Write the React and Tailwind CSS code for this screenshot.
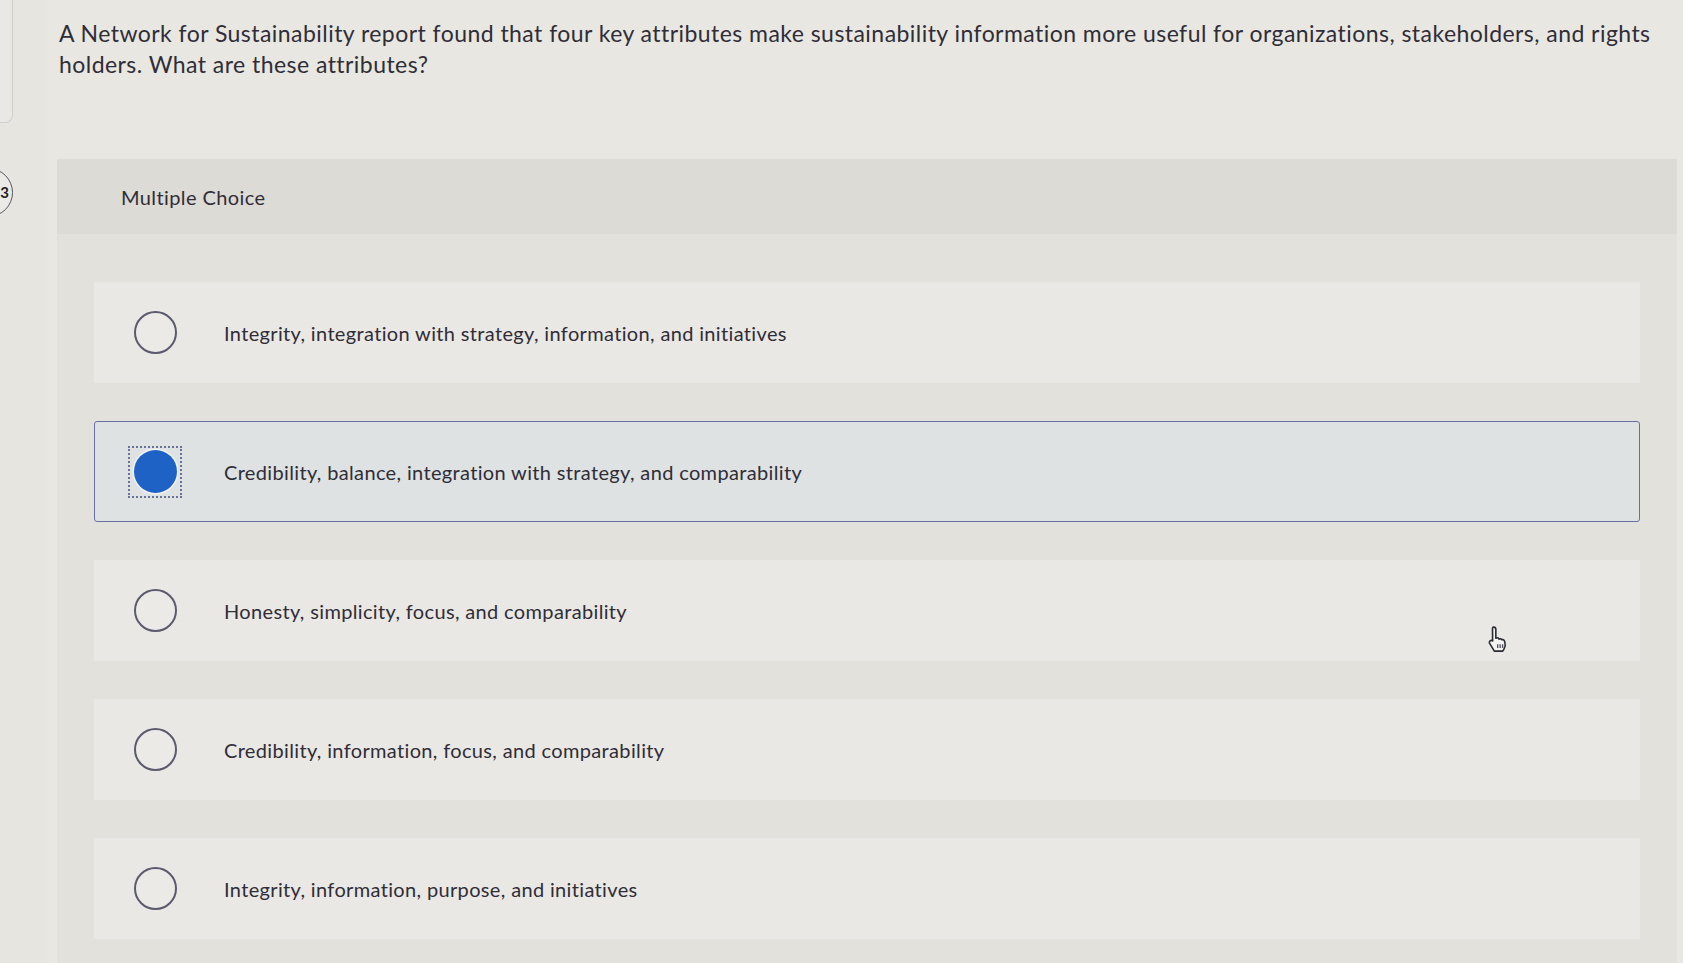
import React from "react";

const options = [
  "Integrity, integration with strategy, information, and initiatives",
  "Credibility, balance, integration with strategy, and comparability",
  "Honesty, simplicity, focus, and comparability",
  "Credibility, information, focus, and comparability",
  "Integrity, information, purpose, and initiatives",
];

function Radio({ selected }) {
  if (selected) {
    return (
      <div className="w-[54px] h-[52px] -ml-[6px] -mr-[5px] border-[2px] border-dotted border-[#6a6f9c] flex items-center justify-center shrink-0">
        <div className="w-[43px] h-[43px] rounded-full bg-[#1f62c6] ring-[1.5px] ring-[#f1f2f2]" />
      </div>
    );
  }
  return (
    <div className="w-[43px] h-[43px] rounded-full border-[2px] border-[#5b5a6e] bg-[#ebeae6] shrink-0" />
  );
}

function Cursor() {
  return (
    <svg width="30" height="32" viewBox="0 0 24 26" className="absolute left-[1486px] top-[624px]">
      <path
        d="M6 2.5c1 0 1.8.8 1.8 1.8v7.2l.6-.2c.9-.3 1.8.2 2.1 1 .7-.4 1.7-.2 2.2.5.8-.3 1.8.1 2.1 1l.4 1.3c.5 1.8.2 3.7-.8 5.3l-1 1.6H6.6L2.9 16c-.6-.8-.4-1.9.4-2.4.6-.4 1.4-.3 1.9.2l-.1-9.5C5.1 3.3 5.2 2.5 6 2.5z"
        fill="#f4f4f2"
        stroke="#2a2a33"
        strokeWidth="1.3"
        strokeLinejoin="round"
      />
      <path d="M9.3 16.5v3M11.3 16.5v3M13.3 16.5v3" stroke="#55555f" strokeWidth="1.1" />
    </svg>
  );
}

export default function App() {
  return (
    <div
      className="relative w-full h-[963px] overflow-hidden bg-[#e8e7e2] flex text-[#302d37]"
      style={{ fontFamily: "Lato, 'Open Sans', sans-serif" }}
    >
      {/* left edge strip */}
      <div className="w-[47px] shrink-0 flex flex-col overflow-hidden bg-[#e6e5e0]">
        <div className="w-[13px] h-[123px] border-r-[1.5px] border-b-[1.5px] border-[#cfcec9] rounded-br-[8px] bg-[#e9e8e4]" />
        <div className="mt-[45px] -ml-[36px] w-[49px] h-[49px] rounded-full border-[1.5px] border-[#55545c] bg-[#ebeae6] flex items-center justify-end pr-[3px] text-[15px] font-bold text-[#222]">
          3
        </div>
      </div>

      {/* main column */}
      <div className="flex-1 flex flex-col pl-[10px] pr-[6px]">
        <p className="pt-[18px] pl-[2px] pr-[20px] text-[23px] leading-[31px] tracking-[0.45px]">
          A Network for Sustainability report found that four key attributes make sustainability information more useful for organizations, stakeholders, and rights holders. What are these attributes?
        </p>

        <div className="mt-[79px] flex flex-col flex-1 bg-[#e2e1dc]">
          <div className="h-[75px] bg-[#dcdbd6] flex items-center pl-[64px] text-[20px] tracking-[0.4px]">
            Multiple Choice
          </div>

          <div className="flex flex-col gap-[38px] px-[37px] pt-[48px]">
            {options.map((opt, i) => {
              const selected = i === 1;
              return (
                <div
                  key={i}
                  className={
                    selected
                      ? "h-[101px] flex items-center pl-[39px] rounded-[3px] border-[1.5px] border-[#6870a3] bg-[#dee2e2]"
                      : "h-[101px] flex items-center pl-[40px] bg-[#e9e8e4]"
                  }
                >
                  <Radio selected={selected} />
                  <span className="ml-[47px] text-[20px] tracking-[0.35px]">{opt}</span>
                </div>
              );
            })}
          </div>
        </div>
      </div>

      <Cursor />
    </div>
  );
}
